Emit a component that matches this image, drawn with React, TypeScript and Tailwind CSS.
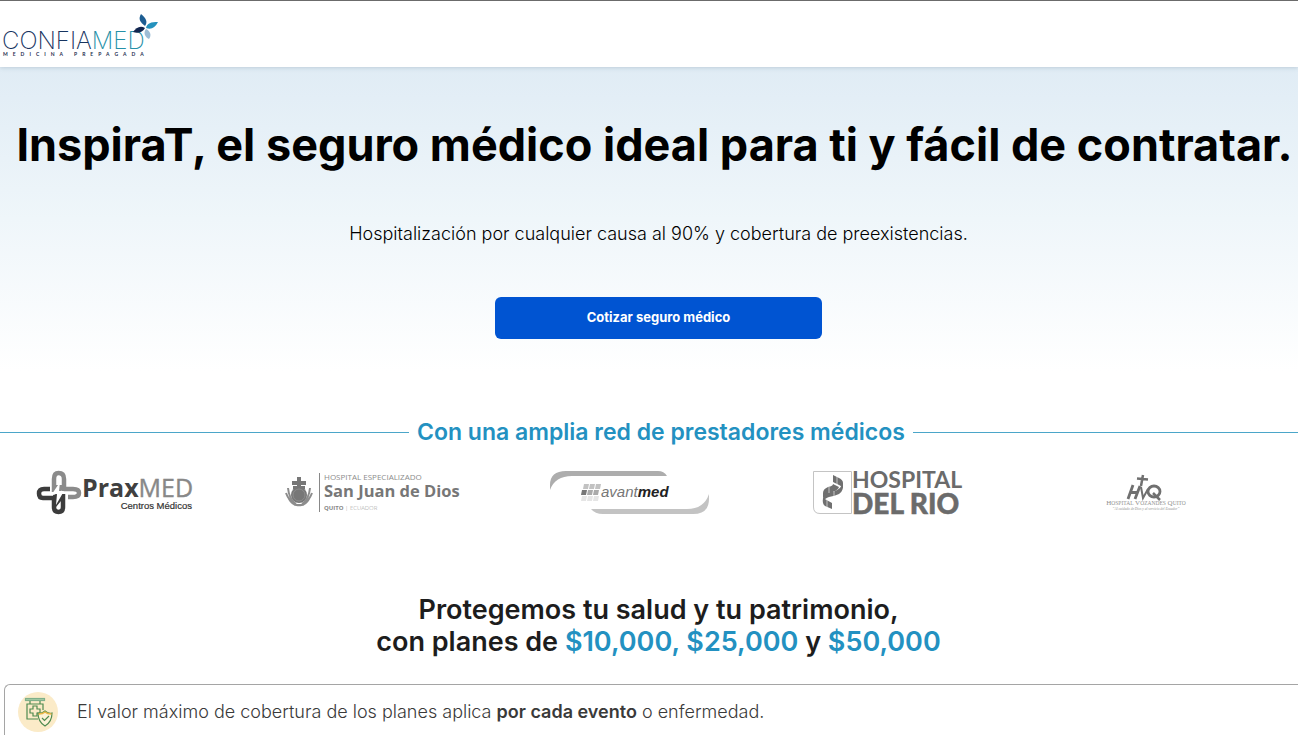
function ConfiamedLogo() {
  return (
    <svg className="overflow-visible" width="160" height="48" viewBox="0 0 160 48" role="img" aria-label="Confiamed Medicina Prepagada">
      <text x="2" y="38" fontSize="24" fontWeight="200" fontFamily="Inter, sans-serif" fill="#17345f">
        CONFIA<tspan fill="#2590a8">MED</tspan>
      </text>
      <text x="3" y="45" fontSize="5" fontWeight="700" className="tracking-[5px]" fontFamily="Lato, sans-serif" fill="#1d2b4d">
        MEDICINA PREPAGADA
      </text>
      <path d="M145 15C140 11 138 8 141 3C146 7 148 11 145 15Z" fill="#1c5d92" />
      <path d="M146 17C147 12 151 11 158 11C155 17 151 19 146 17Z" fill="#2592bd" />
      <path d="M145 17C140 14 136 17 133 21C138 23 143 21 145 17Z" fill="#12264f" />
      <path d="M146 18C150 20 152 24 149 28C145 26 143 22 146 18Z" fill="#9dbdd5" />
    </svg>
  );
}

function PraxmedLogo() {
  return (
    <svg className="overflow-visible" width="180" height="44" viewBox="0 0 180 44" role="img" aria-label="PraxMED Centros Médicos">
      <g fill="none" strokeWidth="4.5">
        <path d="M29 21V8Q29 2 33.500 2Q39 2 39 8V18H48Q54 18 54 22Q54 26 48 26H43" stroke="#8b8b8b" />
        <path d="M38 23V36Q38 41 33.500 41Q29 41 29 36V27H18Q14 27 14 22.500Q14 18 19 18H25" stroke="#3c3c3c" />
      </g>
      <path d="M30 14H37V19L34 24H30Z" fill="#8b8b8b" />
      <path d="M28 24L36 22V30L31 36L29 33Z" fill="#3c3c3c" />
      <path d="M35 11L27 23H32L31 34L39 20H34Z" fill="#fff" />
      <text x="57" y="26" fontSize="25" fontWeight="700" fontFamily="'Open Sans', sans-serif" fill="#404040">
        Prax<tspan fontWeight="400" fill="#888" stroke="#888" strokeWidth="0.4">MED</tspan>
      </text>
      <text x="167" y="38" textAnchor="end" fontSize="9.500" fontFamily="'Liberation Sans', sans-serif" fill="#333" stroke="#333" strokeWidth="0.2">
        Centros Médicos
      </text>
    </svg>
  );
}

function SanJuanLogo() {
  return (
    <svg className="overflow-visible" width="180" height="44" viewBox="0 0 180 44" role="img" aria-label="Hospital Especializado San Juan de Dios">
      <g fill="#777">
        <path d="M14 6h4v4h5v4h-5v4h-4v-4H9v-4h5z" />
        <circle cx="16" cy="24" r="8" />
        <path d="M10 15h12v3H10z" />
      </g>
      <circle cx="16" cy="24" r="6" fill="none" stroke="#929292" strokeWidth="0.8" />
      <path d="M5 17Q6 28 13 33M3 22Q6 30 12 34M27 17Q26 28 19 33M29 22Q26 30 20 34M6 28Q10 35 16 34Q22 35 26 28" fill="none" stroke="#8c8c8c" strokeWidth="2" />
      <path d="M36.500 2V41" stroke="#888" strokeWidth="1" />
      <g fontFamily="'Open Sans', sans-serif">
        <text x="41" y="9" fontSize="8" fill="#8c8c8c">HOSPITAL ESPECIALIZADO</text>
        <text x="41" y="26" fontSize="16.500" fontWeight="700" fill="#777">San Juan de Dios</text>
        <text x="41" y="39" fontSize="6" fontWeight="700" fill="#888">
          QUITO <tspan fontWeight="300" fill="#999">| ECUADOR</tspan>
        </text>
      </g>
    </svg>
  );
}

function AvantmedLogo() {
  return (
    <svg className="overflow-visible" width="180" height="44" viewBox="0 0 180 44" role="img" aria-label="Avantmed">
      <path d="M9 19V14Q9 0 25 0H117Q123 0 126 5H31Q14 5 9 19Z" fill="#adadad" />
      <path d="M168 23V28Q168 43 152 43H62Q54 43 50 38H146Q163 38 168 23Z" fill="#c3c3c3" />
      <path d="M43 13h5l-1 5h-5zM49 13h5l-1 5h-5zM55 13h5l-1 5h-5z" fill="#c2c2c2" />
      <path d="M41 19h5l-1 5h-5z" fill="#777" />
      <path d="M47 19h5l-1 5h-5zM53 19h5l-1 5h-5z" fill="#aaa" />
      <path d="M41 25h5l-1 5h-5zM47 25h5l-1 5h-5zM53 25h5l-1 5h-5z" fill="#e5e5e5" />
      <text x="60" y="26" fontSize="15" fontStyle="italic" fontFamily="'Liberation Sans', sans-serif" fill="#777">
        avant<tspan fontWeight="700" fill="#222">med</tspan>
      </text>
    </svg>
  );
}

function HospitalDelRioLogo() {
  return (
    <svg className="overflow-visible" width="180" height="44" viewBox="0 0 180 44" role="img" aria-label="Hospital del Rio">
      <path d="M15.500 0.500H53.500V42.500H22Q15.500 42.500 15.500 36Z" fill="#fff" stroke="#c4c4c4" />
      <g fill="#707070">
        <path d="M35 4L41 7Q45 9 45 12V19Q44 15 41 14L35 11Z" />
        <path d="M35 13L41 16Q40 19 35 21Q28 23 25 27V22Q25 18 30 16Q35 15 35 13Z" />
        <path d="M44 14Q46 20 41 23Q37 25 31 26Q27 27 25 31V27Q26 22 32 21Q41 20 44 14Z" />
        <path d="M25 27L34 32V38L27 35Q24 33 25 27Z" />
      </g>
      <path d="M39 5V14M31 16V22M36 20V26M29 29V37" stroke="#fff" strokeWidth="0.6" />
      <g fontFamily="Lato, sans-serif" fill="#6b6b6b">
        <text x="54" y="17" fontSize="23" fontWeight="700">HOSPITAL</text>
        <text x="54" y="43" fontSize="28" fontWeight="900" stroke="#6b6b6b" strokeWidth="0.5">DEL RIO</text>
      </g>
    </svg>
  );
}

function VozandesLogo() {
  return (
    <svg className="overflow-visible" width="180" height="44" viewBox="0 0 180 44" role="img" aria-label="Hospital Vozandes Quito">
      <g fill="none" stroke="#707070">
        <path d="M87 4L85 15M81 7.500L92 8.500" strokeWidth="2.500" />
        <path d="M77 14L72 28M84 15L79 28M75 21.500H82" strokeWidth="2.800" />
        <path d="M85 16L87 27L92 18" strokeWidth="2" />
        <ellipse cx="98" cy="20.500" rx="6" ry="5.500" strokeWidth="2.800" />
        <path d="M97 22L104 29" strokeWidth="2.500" />
      </g>
      <g textAnchor="middle" fontFamily="'Liberation Serif', serif" fill="#909090">
        <text x="90" y="34" fontSize="7">
          H<tspan fontSize="5.500">OSPITAL</tspan> V<tspan fontSize="5.500">OZANDES</tspan> Q<tspan fontSize="5.500">UITO</tspan>
        </text>
        <text x="90" y="39" fontSize="3.500" fontStyle="italic">
          “Al cuidado de Dios y al servicio del Ecuador”
        </text>
      </g>
    </svg>
  );
}

function CoverageIcon() {
  return (
    <svg width="40" height="40" viewBox="0 0 40 40" aria-hidden="true">
      <circle cx="20" cy="20" r="20" fill="#fbebc8" />
      <g fill="none" stroke="#4f8b50" strokeWidth="1.2">
        <rect x="7.500" y="6.500" width="19" height="2" fill="#a9cda5" stroke="#7fb08a" />
        <path d="M12 9V12M22 9V12" />
        <path d="M20 27H9V12H25V18" />
        <path d="M15 14H19V17H22V21H19V24H15V21H12V17H15Z" />
        <path d="M27 19Q30 22 34 21Q34 30 27 34Q20 30 20 21Q24 22 27 19Z" fill="#fdf2d6" />
        <path d="M24 26L26.500 28.500L31 24" />
      </g>
      <path d="M20.500 22Q25 22 27 20Q29 22 33.500 22" fill="none" stroke="#e9b646" strokeWidth="1.5" />
    </svg>
  );
}

export default function App() {
  return (
    <div className="min-h-screen overflow-hidden bg-white font-[Inter,sans-serif] text-black">
      <header className="relative border-t border-[#6b6b6b] bg-white pt-2.5 pb-2 shadow-[0_1px_4px_rgba(90,120,140,0.25)]">
        <a href="#" className="block w-fit">
          <ConfiamedLogo />
        </a>
      </header>

      <main>
        <section className="flex flex-col items-center bg-linear-to-b from-[#e0ecf5] via-[#eff6fa] to-white pt-[46px] pb-8 pl-[19px]">
          <h1 className="-ml-2 text-[45px] leading-[64px] font-bold whitespace-nowrap">
            InspiraT, el seguro médico ideal para ti y fácil de contratar.
          </h1>
          <p className="mt-[45px] text-lg leading-6 font-light">
            Hospitalización por cualquier causa al 90% y cobertura de preexistencias.
          </p>
          <button
            type="button"
            className="mt-[51px] h-[42px] w-[327px] rounded-md bg-[#0054d2] text-[13px] font-bold text-white"
          >
            Cotizar seguro médico
          </button>
        </section>

        <section className="pt-[45px]">
          <div className="flex items-center gap-2">
            <span className="h-px w-[409px] bg-[#4ba6c9]" />
            <h2 className="text-[23px] leading-8 font-semibold whitespace-nowrap text-[#2391c1]">
              Con una amplia red de prestadores médicos
            </h2>
            <span className="h-px flex-1 bg-[#4ba6c9]" />
          </div>
          <div className="mt-[23px] flex items-center justify-between pr-[62px] pl-[25px]">
            <PraxmedLogo />
            <SanJuanLogo />
            <AvantmedLogo />
            <HospitalDelRioLogo />
            <VozandesLogo />
          </div>
        </section>

        <section className="pt-[79px] pl-[19px] text-center text-[27px] leading-8 font-semibold text-[#1d1d1d]">
          <h2>
            Protegemos tu salud y tu patrimonio,
            <br />
            con planes de <span className="text-[#2391c1]">$10,000, $25,000</span> y{" "}
            <span className="text-[#2391c1]">$50,000</span>
          </h2>
        </section>

        <section className="mt-[26px] ml-1 flex items-center gap-[19px] rounded-tl-md border-t border-l border-[#a5a5a5] pt-[7px] pb-1 pl-[13px]">
          <CoverageIcon />
          <p className="text-lg leading-6 font-light text-[#3a3a3a]">
            El valor máximo de cobertura de los planes aplica <strong className="font-semibold">por cada evento</strong> o
            enfermedad.
          </p>
        </section>
      </main>
    </div>
  );
}
